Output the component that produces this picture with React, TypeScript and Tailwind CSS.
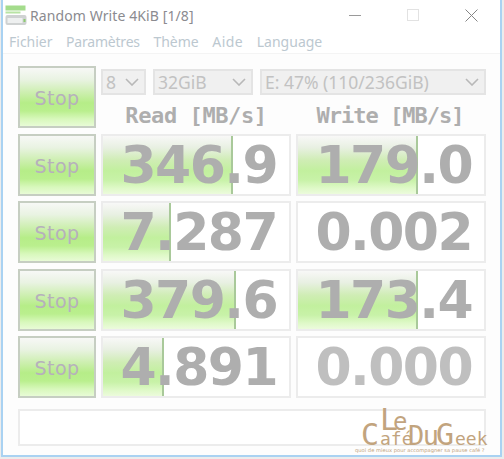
import React from "react";

const stopBg = "bg-[linear-gradient(180deg,#f7f8f6_0%,#e9f3e2_20%,#cdefb0_42%,#b6ed88_60%,#baef8e_74%,#d8f8bc_88%,#e8fbd6_100%)]";
const meterBg = "bg-[linear-gradient(180deg,#f8f8f7_0%,#e8f0e2_20%,#cfedb4_42%,#c2f09e_60%,#c8f2a8_76%,#dff9c8_90%,#ecfbdc_100%)]";

function StopButton() {
  return (
    <div className={`h-[62px] flex items-center justify-center pt-[2px] border-2 border-[#c6cec2] ${stopBg} text-[#b6b0bc] text-[19px] tracking-[0.4px] font-['DejaVu_Sans',sans-serif]`}>
      Stop
    </div>
  );
}

function Cell({ value, meter, light }: { value: string; meter: number; light?: boolean }) {
  return (
    <div className="relative h-[62px] border-2 border-[#ececec] bg-white overflow-hidden">
      {meter > 0 && (
        <div
          className={`absolute left-0 top-0 bottom-0 ${meterBg} border-r-2 border-[#a9c99a]`}
          style={{ width: meter }}
        />
      )}
      <div
        className={`relative h-full flex items-center justify-end pr-[12px] text-[52px] font-bold tracking-[-1.6px] leading-none font-['DejaVu_Sans',sans-serif] ${light ? "text-[#bfbfbf]" : "text-[#aeaeae]"}`}
      >
        {value}
      </div>
    </div>
  );
}

function Select({ label, className }: { label: string; className: string }) {
  return (
    <div className={`h-[26px] flex items-center justify-between border-2 border-[#e4e4e4] bg-[#f0f0f0] pl-[3px] pr-[5px] text-[#c2c2c2] text-[17.5px] font-['Noto_Sans',sans-serif] ${className}`}>
      <span>{label}</span>
      <svg width="14" height="8" viewBox="0 0 14 8" fill="none" stroke="#b8b8b8" strokeWidth="1.6">
        <path d="M1 1l6 6 6-6" />
      </svg>
    </div>
  );
}

const rows = [
  { r: "346.9", rm: 130, w: "179.0", wm: 120 },
  { r: "7.287", rm: 68, w: "0.002", wm: 0 },
  { r: "379.6", rm: 133, w: "173.4", wm: 120, gap: true },
  { r: "4.891", rm: 61, w: "0.000", wm: 0, light: true },
];

export default function App() {
  return (
    <div className="w-[504px] h-[459px] bg-[#ececec] pb-[2px] overflow-hidden font-['Noto_Sans',sans-serif]">
      <div className="ml-[1px] mr-[2px] h-[457px] border-x-2 border-b-2 border-[#a9d2f2] bg-[#fdfdfd] flex flex-col relative">
        {/* Title bar */}
        <div className="h-[30px] flex items-center bg-white shrink-0">
          <svg className="ml-[2px]" width="22" height="22" viewBox="0 0 22 22">
            <rect x="0.5" y="1.5" width="20" height="5" fill="#a4dc8c" />
            <rect x="0.5" y="7.5" width="15" height="2" fill="#b8e4a4" />
            <rect x="0.5" y="11" width="21" height="10" rx="2" fill="#cfd2d2" />
            <rect x="2.5" y="14" width="15" height="5" fill="#eef0f0" />
            <rect x="18.5" y="15" width="2" height="3" fill="#8ecb72" />
          </svg>
          <span className="ml-[3px] text-[14px] tracking-[0.1px] text-[#8b8b90] whitespace-nowrap">Random Write 4KiB [1/8]</span>
          <div className="ml-auto flex items-center gap-[46px] pr-[22px]">
            <div className="w-[12px] h-[1px] bg-[#9a9a9a]" />
            <div className="w-[12px] h-[12px] border border-[#e2e2e2]" />
            <svg width="13" height="13" viewBox="0 0 13 13" stroke="#858585" strokeWidth="1" fill="none">
              <path d="M0.5 0.5l12 12M12.5 0.5l-12 12" />
            </svg>
          </div>
        </div>
        {/* Menu */}
        <div className="h-[24px] flex items-center gap-[13.5px] pl-[6px] text-[14px] text-[#bcc8d0] bg-white border-b border-[#f4f4f4] shrink-0">
          <span>Fichier</span>
          <span className="tracking-[-0.2px]">Paramètres</span>
          <span>Thème</span>
          <span className="tracking-[0.5px]">Aide</span>
          <span>Language</span>
        </div>
        {/* Main */}
        <div className="pl-[15px] pt-[12px] flex flex-col gap-[5px]">
          <div className="grid grid-cols-[78px_190px_190px] gap-x-[5px] mb-[1px]">
            <StopButton />
            <div className="col-span-2 h-[62px] flex flex-col">
              <div className="flex gap-[7px] mt-[3px]">
                <Select label="8" className="w-[45px]" />
                <Select label="32GiB" className="w-[100px]" />
                <Select label="E: 47% (110/236GiB)" className="w-[226px]" />
              </div>
              <div className="flex-1 pt-[9px] grid grid-cols-2 gap-x-[5px] text-[22px] font-bold text-[#aeaeae] font-['DejaVu_Sans_Mono',monospace] leading-none items-center text-center">
                <span className="tracking-[-0.4px]">Read [MB/s]</span>
                <span className="tracking-[-1px] pr-[2px]">Write [MB/s]</span>
              </div>
            </div>
          </div>
          {rows.map((row) => (
            <div key={row.r} className={`grid grid-cols-[78px_190px_190px] gap-x-[5px] ${row.gap ? "mt-[1px]" : ""}`}>
              <StopButton />
              <Cell value={row.r} meter={row.rm} />
              <Cell value={row.w} meter={row.wm} light={row.light} />
            </div>
          ))}
          <div className="mt-[6px] w-[468px] h-[37px] border-2 border-[#ececec] bg-white" />
        </div>
        {/* Watermark */}
        <div className="absolute left-[340px] top-[406px] w-[158px] h-[50px] text-[#c2a47e] font-['DejaVu_Sans_Mono',monospace] leading-none pointer-events-none">
          <span className="absolute left-[37px] top-[-1px] text-[30px]">L</span>
          <span className="absolute left-[50px] top-[4px] text-[24px]">e</span>
          <span className="absolute left-[18px] top-[14px] text-[30px]">C</span>
          <span className="absolute left-[37px] top-[24px] text-[18px]">afé</span>
          <span className="absolute left-[65px] top-[16px] text-[27px] tracking-[-1.5px]">Du</span>
          <span className="absolute left-[93px] top-[14px] text-[30px]">G</span>
          <span className="absolute left-[112px] top-[24px] text-[18px]">eek</span>
          <span className="absolute left-[12px] top-[42px] text-[5.2px] whitespace-nowrap font-['DejaVu_Sans',sans-serif]">quoi de mieux pour accompagner sa pause café ?</span>
        </div>
      </div>
    </div>
  );
}
